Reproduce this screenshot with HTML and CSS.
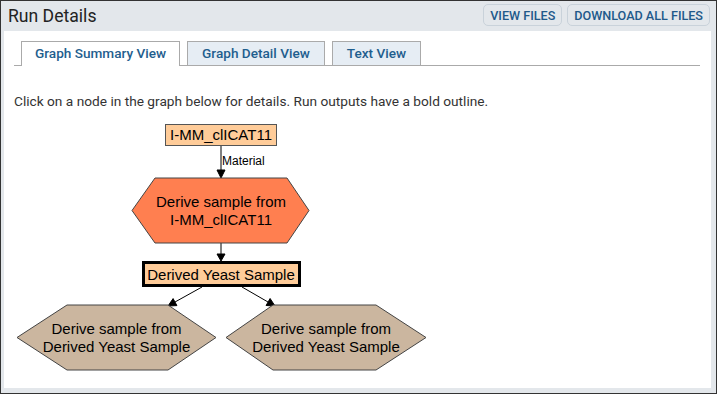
FILE: index.html
```html
<!DOCTYPE html>
<html lang="en">
<head>
    <meta charset="UTF-8">
    <title>Run Details</title>
    <link rel="stylesheet" href="styles.css">
</head>
<body>
    <div class="panel">
        <div class="panel-header">
            <h1>Run Details</h1>
            <div class="actions">
                <button>View Files</button>
                <button>Download All Files</button>
            </div>
        </div>

        <div class="panel-body">
            <ul class="tabs">
                <li class="tab active">Graph Summary View</li>
                <li class="tab">Graph Detail View</li>
                <li class="tab">Text View</li>
            </ul>

            <p class="hint">Click on a node in the graph below for details. Run outputs have a bold outline.</p>

            <svg class="graph" width="430" height="256" viewBox="14 120 430 256">
                <!-- edges -->
                <g stroke="#000" stroke-width="1" fill="#000">
                    <line x1="221" y1="146" x2="221" y2="172" />
                    <polygon points="217,171 225,171 221,179" />
                    <line x1="221" y1="244" x2="221" y2="256" />
                    <polygon points="217,255 225,255 221,262" />
                    <line x1="202" y1="288" x2="175" y2="303" />
                    <polygon points="168,307 176.9,306.6 173.1,299.6" />
                    <line x1="242" y1="288" x2="268" y2="303" />
                    <polygon points="275,307 266.1,306.5 270.1,299.5" />
                </g>
                <text class="edge-label" x="222" y="166">Material</text>

                <!-- material -->
                <rect x="165.5" y="125.5" width="111" height="21" fill="#ffcc99" stroke="#555" />
                <text class="node-text" x="221" y="141">I-MM_clICAT11</text>

                <!-- protocol from material -->
                <polygon points="155,179 287,179 309,211.5 287,244 155,244 132,211.5" fill="#ff7f50" stroke="#444" />
                <text class="node-text" x="221" y="208">Derive sample from</text>
                <text class="node-text" x="221" y="226">I-MM_clICAT11</text>

                <!-- run output -->
                <rect x="143.5" y="263.5" width="156" height="23" fill="#ffcc99" stroke="#000" stroke-width="3" />
                <text class="node-text" x="221" y="281">Derived Yeast Sample</text>

                <!-- derived protocols -->
                <polygon points="67,306 168,306 216,338.5 168,371 67,371 17,338.5" fill="#cbb69f" stroke="#444" />
                <text class="node-text" x="116.5" y="335">Derive sample from</text>
                <text class="node-text" x="116.5" y="353">Derived Yeast Sample</text>

                <polygon points="273,306 376,306 426,338.5 376,371 273,371 226,338.5" fill="#cbb69f" stroke="#444" />
                <text class="node-text" x="326" y="335">Derive sample from</text>
                <text class="node-text" x="326" y="353">Derived Yeast Sample</text>
            </svg>
        </div>
    </div>
</body>
</html>
```

FILE: styles.css
```css
body {
    margin: 0;
    padding: 0;
    font-family: Roboto, 'Liberation Sans', sans-serif;
    background-color: white;
    color: #333;
}

.panel {
    box-sizing: border-box;
    width: 717px;
    height: 394px;
    border: 1px solid #333;
    background-color: #e3e7eb;
    display: flex;
    flex-direction: column;
}

.panel-header {
    height: 30px;
    display: flex;
    align-items: center;
    justify-content: space-between;
    padding: 0 6px 0 7px;
}

.panel-header h1 {
    margin: 0;
    font-size: 17.6px;
    font-weight: 400;
    color: #222;
}

.actions {
    display: flex;
    gap: 5px;
    margin-top: -2px;
}

.actions button {
    height: 22px;
    padding: 0 6px;
    background: transparent;
    border: 1px solid #c9d2da;
    border-radius: 5px;
    color: #21598a;
    font-family: Roboto, 'Liberation Sans', sans-serif;
    font-size: 12.6px;
    font-weight: 500;
    text-transform: uppercase;
    cursor: pointer;
}

.panel-body {
    flex: 1;
    background-color: white;
    margin: 0 5px 5px 3px;
    padding: 10px 11px 0 10px;
}

.tabs {
    list-style: none;
    margin: 0;
    padding: 0 0 0 7px;
    display: flex;
    gap: 7px;
    border-bottom: 1px solid #aaa;
}

.tab {
    height: 23px;
    line-height: 23px;
    padding: 0 14px;
    border: 1px solid #aaa;
    border-bottom: none;
    background-color: #e6edf4;
    color: #1f5e8e;
    font-size: 13.6px;
    font-weight: 500;
    margin-bottom: -1px;
}

.tab.active {
    background-color: white;
    height: 24px;
    padding: 0 13px;
}

.hint {
    margin: 27px 0 0 0;
    font-size: 13.7px;
    line-height: 16px;
    color: #333;
}

.graph {
    display: block;
    margin-top: 10px;
}

.node-text {
    font-family: 'Liberation Sans', Arial, sans-serif;
    font-size: 15px;
    text-anchor: middle;
    fill: #000;
}

.edge-label {
    font-family: 'Liberation Sans', Arial, sans-serif;
    font-size: 12px;
    fill: #000;
}
```
